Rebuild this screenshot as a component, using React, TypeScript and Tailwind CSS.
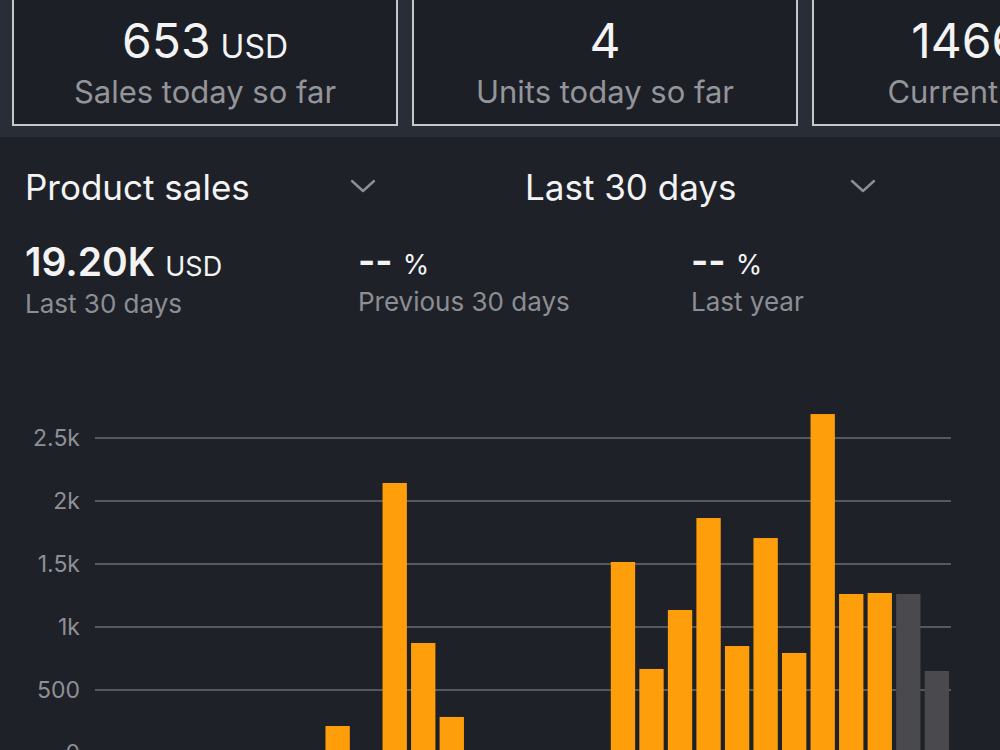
import React from "react";

type Tile = { value: string; unit?: string; label: string };

const tiles: Tile[] = [
	{ value: "653", unit: "USD", label: "Sales today so far" },
	{ value: "4", label: "Units today so far" },
	{ value: "1466", unit: "USD", label: "Current balance" },
];

const stats = [
	{ value: "19.20K", unit: "USD", label: "Last 30 days", dashes: false },
	{ value: "--", unit: "%", label: "Previous 30 days", dashes: true },
	{ value: "--", unit: "%", label: "Last year", dashes: true },
];

// daily sales for the last 30 days, last two days are projections
const daily = [
	0, 0, 0, 0, 0, 0, 0, 0, 214, 0, 2143, 873, 286, 0, 0, 0, 0, 0, 1516, 667,
	1135, 1865, 849, 1706, 794, 2690, 1262, 1270, 1262, 651,
];
const projected = 2;

const ticks = [2500, 2000, 1500, 1000, 500, 0];

const Chevron = () => (
	<svg width="26" height="15" viewBox="0 0 26 15" fill="none">
		<polyline
			points="2,2 13,12 24,2"
			stroke="#8d8e93"
			strokeWidth="2.4"
			strokeLinecap="round"
			strokeLinejoin="round"
		/>
	</svg>
);

const SalesChart = () => {
	const left = 95;
	const right = 951;
	const zero = 353;
	const scale = 63 / 500;
	const slot = (right - left) / daily.length;

	return (
		<svg width="1000" height="380" className="block shrink-0">
			{ticks.map((t) => {
				const y = zero - t * scale;
				return (
					<g key={t}>
						<line x1={left} x2={right} y1={y} y2={y} stroke="#55585f" strokeWidth="2" />
						<text
							x="80"
							y={y + 8}
							textAnchor="end"
							fill="#8f9095"
							fontSize="23"
						>
							{t === 0 ? "0" : t >= 1000 ? `${t / 1000}k` : t}
						</text>
					</g>
				);
			})}
			{daily.map((v, i) => {
				if (!v) return null;
				const h = v * scale;
				const isProjected = i >= daily.length - projected;
				return (
					<rect
						key={i}
						x={left + i * slot + 2.2}
						y={zero - h}
						width={slot - 4.2}
						height={h}
						fill={isProjected ? "#4a4a4e" : "#ff9e0b"}
					/>
				);
			})}
		</svg>
	);
};

export default function App() {
	return (
		<div className="h-[750px] w-[1000px] overflow-hidden bg-[#1e2128] font-['Inter','Liberation_Sans',sans-serif] text-[#f3f3f4]">
			{/* today's summary tiles */}
			<div className="flex h-[137px] gap-[14px] overflow-hidden bg-[#292d35] pl-[12px]">
				{tiles.map((tile) => (
					<div
						key={tile.label}
						className="mt-[-14px] flex h-[140px] w-[386px] shrink-0 flex-col items-center border-2 border-[#c6c7cb] bg-[#1c1f26] pt-[29px]"
					>
						<div className="flex items-baseline gap-[10px] leading-none">
							<span className="text-[48px]">{tile.value}</span>
							{tile.unit && <span className="text-[32px]">{tile.unit}</span>}
						</div>
						<div className="mt-[11px] whitespace-nowrap text-[31px] leading-none text-[#94959a]">
							{tile.label}
						</div>
					</div>
				))}
			</div>

			{/* metric and period pickers */}
			<div className="grid grid-cols-2 pt-[33px]">
				{["Product sales", "Last 30 days"].map((label) => (
					<div key={label} className="flex w-[376px] items-center justify-between pl-[25px]">
						<span className="text-[35px] leading-none">{label}</span>
						<span className="mb-[2px]">
							<Chevron />
						</span>
					</div>
				))}
			</div>

			{/* totals */}
			<div className="grid grid-cols-[333px_333px_1fr] pl-[25px] pt-[37px]">
				{stats.map((s) => (
					<div key={s.label} className="flex flex-col">
						<div className="flex items-baseline gap-[10px] leading-none">
							<span className={s.dashes ? "text-[37px] font-bold" : "text-[39px] font-semibold"}>
								{s.value}
							</span>
							<span className="text-[27px]">{s.unit}</span>
						</div>
						<div className="mt-[10px] text-[26px] leading-none text-[#8d8e93]">
							{s.label}
						</div>
					</div>
				))}
			</div>

			<div className="mt-[83px]">
				<SalesChart />
			</div>
		</div>
	);
}
